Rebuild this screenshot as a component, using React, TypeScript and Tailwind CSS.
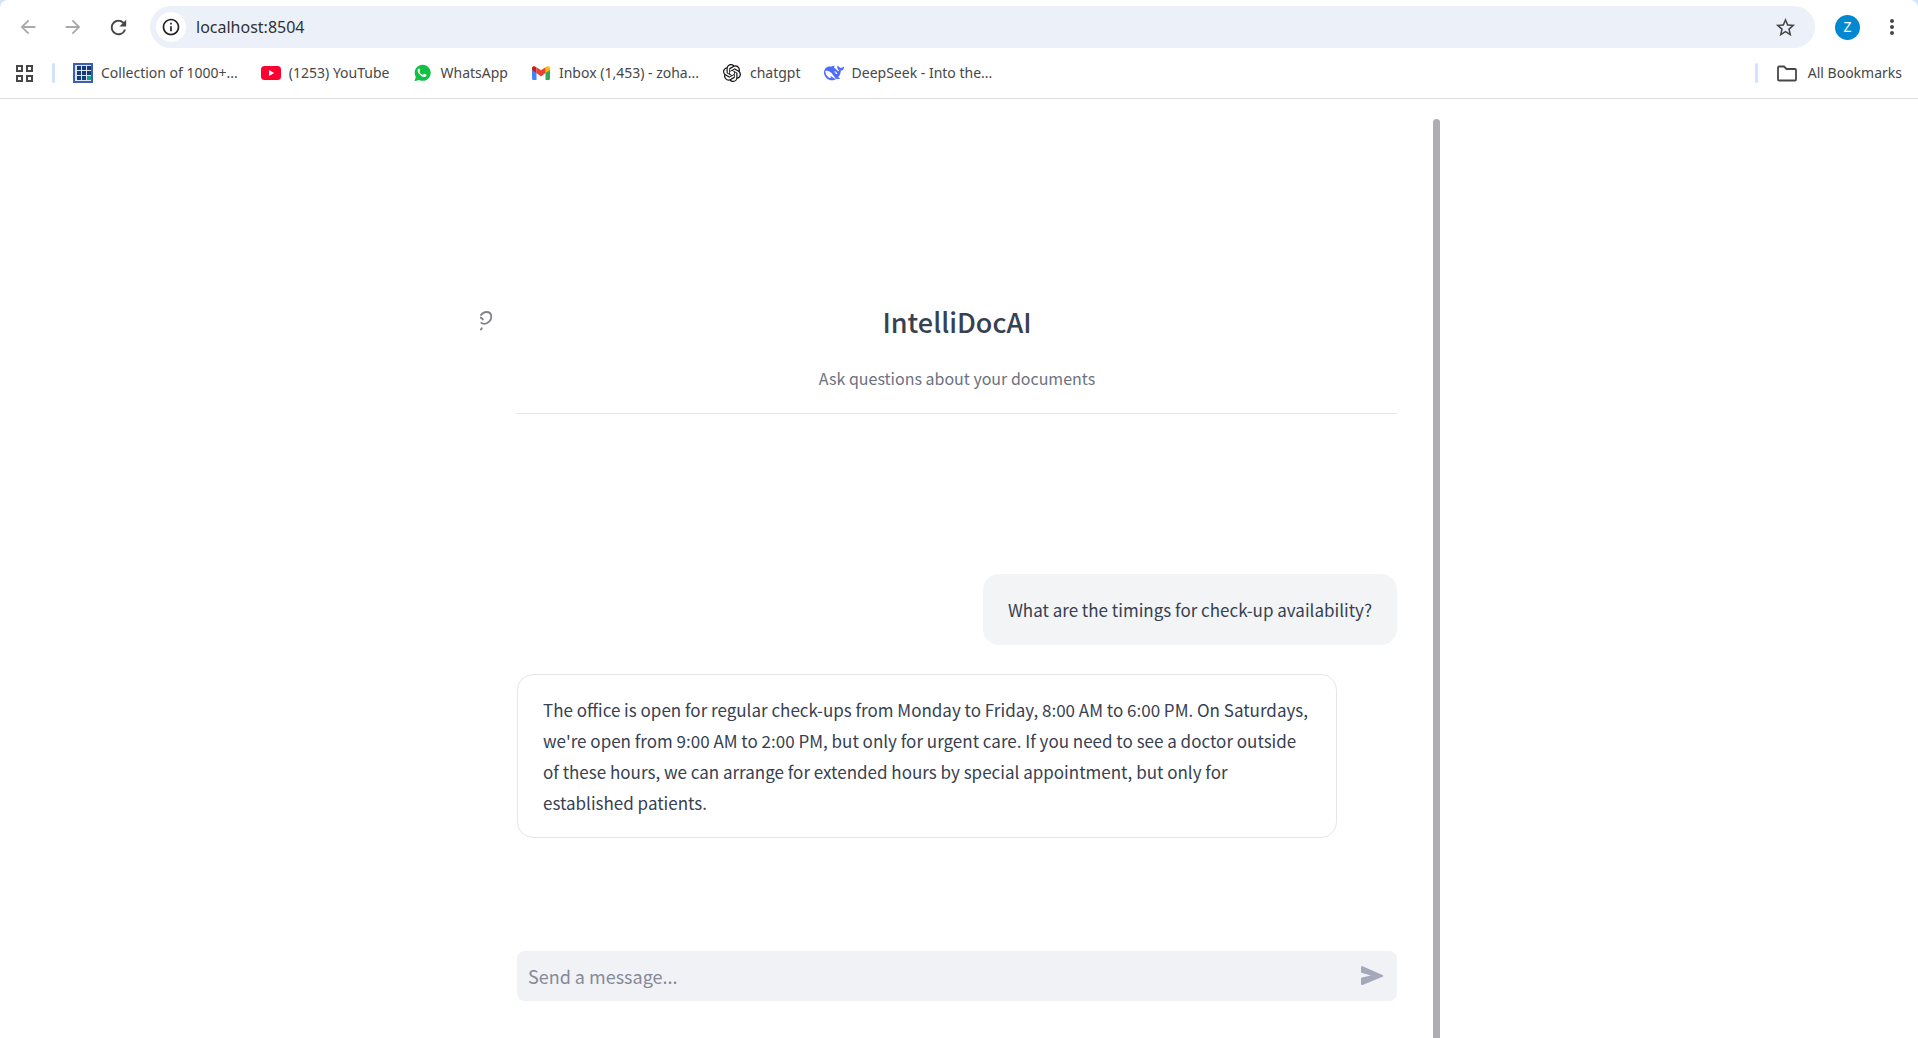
import React from "react";
import {
  MdArrowBack,
  MdArrowForward,
  MdInfoOutline,
  MdMoreVert,
  MdRefresh,
  MdStarBorder,
} from "react-icons/md";
import { SiOpenai } from "react-icons/si";

function SheetIcon() {
  const cells = [0, 1, 2, 3, 4, 5, 6, 7, 8];
  return (
    <svg viewBox="0 0 20 20" className="size-5 shrink-0" aria-hidden="true">
      <rect width="20" height="20" fill="#3c5fb4" />
      <rect x="2" y="2" width="16" height="16" fill="#dfe6ee" />
      {cells.map((i) => (
        <rect
          key={i}
          x={4 + (i % 3) * 5}
          y={3 + Math.floor(i / 3) * 5}
          width="4"
          height="4"
          fill={i === 8 ? "#16a085" : "#123a7c"}
        />
      ))}
    </svg>
  );
}

function YouTubeIcon() {
  return (
    <svg viewBox="0 0 20 20" className="size-5 shrink-0" aria-hidden="true">
      <rect y="3" width="20" height="14" rx="3.5" fill="#ff0033" />
      <path d="M8 7l5.2 3L8 13z" fill="#fff" />
    </svg>
  );
}

function WhatsAppIcon() {
  return (
    <svg viewBox="0 0 20 20" className="size-5 shrink-0" aria-hidden="true">
      <path d="M2.500 18.200l1.300-4.300A8 8 0 1 1 7 16.900z" fill="#12c143" />
      <path
        d="M7.600 5.800c-.3-.6-.9-.5-1.300-.1-1.300 1.300-.7 3.200.8 5.100 1.700 2.200 3.700 3.400 5.500 3.200 1.200-.2 1.900-1 1.900-2 0-.3-.1-.4-.4-.5l-1.700-.8c-.3-.1-.5-.1-.7.2l-.7.8c-.2.2-.4.2-.6.1-1.300-.6-2.200-1.400-2.900-2.600-.1-.2-.1-.4.1-.6l.5-.7c.1-.2.1-.3 0-.5z"
        fill="#fff"
      />
    </svg>
  );
}

function GmailIcon() {
  return (
    <svg viewBox="0 0 20 20" className="size-5 shrink-0" aria-hidden="true">
      <path d="M1 6v9.500A1.500 1.500 0 0 0 2.500 17H5.500V9z" fill="#4285f4" />
      <path d="M19 6v9.500a1.500 1.500 0 0 1-1.500 1.500H14.500V9z" fill="#34a853" />
      <path d="M14.500 4.500V10l4.500-3V5.200c0-2-2-2.500-3.300-1.500z" fill="#fbbc04" />
      <path d="M5.500 4.500V10L1 7V5.200c0-2 2-2.500 3.300-1.500z" fill="#c5221f" />
      <path d="M5.500 4.300l4.500 3 4.500-3V10L10 13.500 5.500 10z" fill="#ea4335" />
    </svg>
  );
}

function DeepSeekIcon() {
  return (
    <svg viewBox="0 0 24 24" className="size-5 shrink-0" fill="#4d6bfe" aria-hidden="true">
      <path d="M23.748 4.482c-.254-.124-.364.113-.512.234-.051.039-.094.090-.137.136-.372.397-.806.657-1.373.626-.829-.046-1.537.214-2.163.848-.133-.782-.575-1.248-1.247-1.548-.352-.156-.708-.311-.955-.650-.172-.241-.219-.510-.305-.774-.055-.160-.110-.323-.293-.350-.200-.031-.278.136-.356.276-.313.572-.434 1.202-.422 1.840.027 1.436.633 2.580 1.838 3.393.137.093.172.187.129.323-.082.280-.180.552-.266.833-.055.179-.137.217-.329.140a5.526 5.526 0 0 1-1.736-1.180c-.857-.828-1.631-1.742-2.597-2.458a11.365 11.365 0 0 0-.689-.471c-.985-.957.130-1.743.388-1.836.270-.098.093-.432-.779-.428-.872.004-1.670.295-2.687.684a3.055 3.055 0 0 1-.465.137 9.597 9.597 0 0 0-2.883-.102c-1.885.210-3.390 1.102-4.497 2.623C.082 8.606-.231 10.684.152 12.850c.403 2.284 1.569 4.175 3.360 5.653 1.858 1.533 3.997 2.284 6.438 2.140 1.482-.085 3.133-.284 4.994-1.860.470.234.962.327 1.780.397.630.059 1.236-.030 1.705-.128.735-.156.684-.837.419-.961-2.155-1.004-1.682-.595-2.113-.926 1.096-1.296 2.746-2.642 3.392-7.003.050-.347.007-.565 0-.845-.004-.170.035-.237.230-.256a4.173 4.173 0 0 0 1.545-.475c1.396-.763 1.960-2.015 2.093-3.517.020-.230-.004-.467-.247-.588zM11.581 18c-2.089-1.642-3.102-2.183-3.520-2.160-.392.024-.321.471-.235.763.090.288.207.486.371.739.114.167.192.416-.113.603-.673.416-1.842-.140-1.897-.167-1.361-.802-2.500-1.860-3.301-3.307-.774-1.393-1.224-2.887-1.298-4.482-.020-.386.093-.522.477-.592a4.696 4.696 0 0 1 1.529-.039c2.132.312 3.946 1.265 5.468 2.774.868.860 1.525 1.887 2.202 2.891.720 1.066 1.494 2.082 2.480 2.914.348.292.625.514.891.677-.802.090-2.140.110-3.054-.614zm1-6.440a.306.306 0 0 1 .415-.287.302.302 0 0 1 .200.288.306.306 0 0 1-.310.307.303.303 0 0 1-.304-.308zm3.110 1.596c-.200.081-.399.151-.590.160a1.245 1.245 0 0 1-.798-.254c-.274-.230-.470-.358-.552-.758a1.730 1.730 0 0 1 .016-.588c.070-.327-.008-.537-.239-.727-.187-.156-.426-.199-.688-.199a.559.559 0 0 1-.254-.078c-.110-.054-.200-.190-.114-.358.028-.054.160-.186.192-.210.356-.202.767-.136 1.146.016.352.144.618.408 1.001.782.391.451.462.576.685.914.176.265.336.537.445.848.067.195-.019.354-.250.452z" />
    </svg>
  );
}

const bookmarks = [
  { label: "Collection of 1000+...", icon: <SheetIcon /> },
  { label: "(1253) YouTube", icon: <YouTubeIcon /> },
  { label: "WhatsApp", icon: <WhatsAppIcon /> },
  { label: "Inbox (1,453) - zoha...", icon: <GmailIcon /> },
  { label: "chatgpt", icon: <SiOpenai className="mx-px size-[18px] shrink-0 text-[#111]" /> },
  { label: "DeepSeek - Into the...", icon: <DeepSeekIcon /> },
];

function BrowserBar() {
  return (
    <header className="shrink-0 border-b border-[#dcdee0] bg-[#d3e3fd] font-['Noto_Sans',sans-serif]">
      <div className="rounded-t-lg bg-white">
        <div className="flex h-[54px] items-center pr-3.5 pl-4">
          <nav className="flex gap-[21px]" aria-label="History">
            <button aria-label="Back" className="flex size-6 items-center justify-center text-[#a9a9a9]">
              <MdArrowBack className="size-[22px]" />
            </button>
            <button aria-label="Forward" className="flex size-6 items-center justify-center text-[#a9a9a9]">
              <MdArrowForward className="size-[22px]" />
            </button>
            <button aria-label="Reload" className="flex size-6 items-center justify-center text-[#474747]">
              <MdRefresh className="size-[23px]" />
            </button>
          </nav>
          <div className="ml-5 flex h-[42px] flex-1 items-center rounded-full bg-[#ebf0f9] pr-[18px] pl-1.5">
            <button aria-label="Site information" className="flex size-[30px] items-center justify-center rounded-full bg-white text-[#1f1f1f]">
              <MdInfoOutline className="size-5" />
            </button>
            <input
              aria-label="Address"
              defaultValue="localhost:8504"
              className="ml-2.5 min-w-0 flex-1 bg-transparent text-base text-[#303234] outline-none"
            />
            <button aria-label="Bookmark this page" className="text-[#474747]">
              <MdStarBorder className="size-[23px]" />
            </button>
          </div>
          <button aria-label="Profile" className="ml-5 flex size-[25px] items-center justify-center rounded-full bg-[#0288d1] text-sm text-white">
            Z
          </button>
          <button aria-label="Menu" className="ml-5 text-[#474747]">
            <MdMoreVert className="size-6" />
          </button>
        </div>
        <div className="flex h-11 items-start pt-1.5 pr-4 pl-3.5 text-sm text-[#474747]">
          <div className="flex h-[26px] flex-1 items-center">
            <button aria-label="Apps">
              <svg viewBox="0 0 20 20" className="size-5" fill="none" stroke="#474747" strokeWidth="2" aria-hidden="true">
                <path d="M3 3h5v5H3zM13 3h5v5h-5zM3 13h5v5H3zM13 13h5v5h-5z" />
              </svg>
            </button>
            <span className="ml-[18px] h-5 w-[3px] rounded-sm bg-[#d3e3fd]" />
            <nav className="ml-[18px] flex gap-[23px]" aria-label="Bookmarks">
              {bookmarks.map((b) => (
                <a key={b.label} href="#" className="flex items-center gap-2 whitespace-nowrap">
                  {b.icon}
                  {b.label}
                </a>
              ))}
            </nav>
          </div>
          <div className="flex h-[26px] items-center">
            <span className="h-5 w-[3px] rounded-sm bg-[#d3e3fd]" />
            <button className="ml-[18px] flex items-center gap-2.5">
              <svg viewBox="0 0 22 20" className="h-5 w-[22px]" fill="none" stroke="#474747" strokeWidth="1.800" strokeLinejoin="round" aria-hidden="true">
                <path d="M2 16.500v-12a1 1 0 0 1 1-1h5l2.500 2.500H19a1 1 0 0 1 1 1v9.500a1 1 0 0 1-1 1H3a1 1 0 0 1-1-1z" />
              </svg>
              All Bookmarks
            </button>
          </div>
        </div>
      </div>
    </header>
  );
}

export default function App() {
  return (
    <div className="flex min-h-screen flex-col bg-white text-[#374151]">
      <BrowserBar />
      <div className="mx-auto flex w-full max-w-[962px] flex-1 pt-5 font-['Noto_Sans_CJK_SC',sans-serif]">
        <main className="relative flex flex-1 flex-col pr-9 pl-[39px]">
          <a href="#title" aria-label="Link to heading" className="absolute top-48 left-0.5">
            <svg viewBox="0 0 13 20" className="h-5 w-[13px]" fill="none" stroke="#808289" strokeWidth="1.800" aria-hidden="true">
              <path d="M.5 4.500C2 2.500 4 1 6.500 1c3 0 4.800 2 4.800 4.800 0 3.500-3.300 7-7 7-1.500 0-2.600-.5-3.600-1.500M0 6.500c1.700.3 2.800 1.300 3.200 2.800M.3 19c1-.7 1.500-1.500 1.700-2.500" />
            </svg>
          </a>
          <div className="border-b border-[#e2e4e7] pt-[184px] pb-5 text-center">
            <h1 id="title" className="text-[27px] leading-[38px] font-medium">
              IntelliDocAI
            </h1>
            <p className="mt-[22px] text-base leading-[30px] text-[#6b7280]">Ask questions about your documents</p>
          </div>
          <section className="flex flex-col gap-[29px] pt-40 text-[17px] leading-[31px]" aria-label="Conversation">
            <p className="self-end rounded-2xl bg-[#f2f4f6] px-[25px] py-5">What are the timings for check-up availability?</p>
            <p className="mr-15 rounded-2xl border border-[#e4e6e9] px-[25px] py-[19px]">
              The office is open for regular check-ups from Monday to Friday, 8:00 AM to 6:00 PM. On Saturdays, we're open
              from 9:00 AM to 2:00 PM, but only for urgent care. If you need to see a doctor outside of these hours, we can
              arrange for extended hours by special appointment, but only for established patients.
            </p>
          </section>
          <form className="mt-auto mb-[37px] flex h-[50px] items-center rounded-lg bg-[#f0f2f6] pr-3 pl-[11px]">
            <input
              aria-label="Message"
              placeholder="Send a message..."
              className="min-w-0 flex-1 bg-transparent text-lg outline-none placeholder:text-[#858998]"
            />
            <button type="button" aria-label="Send">
              <svg viewBox="0 0 26 24" className="h-6 w-[26px]" fill="#a4a8b8" aria-hidden="true">
                <path d="M2 3.500v4.300c0 .7.4 1.100 1.100 1.300L12 11.500l-8.900 1.900c-.7.200-1.100.6-1.100 1.300v5c0 1 .7 1.500 1.600 1.200L23.500 12.800c1.100-.5 1.100-1.300 0-1.800L3.600 2.300C2.700 2 2 2.500 2 3.500z" />
              </svg>
            </button>
          </form>
        </main>
        <div className="w-[7px] rounded-t-full bg-[#adadb2]" />
      </div>
    </div>
  );
}
